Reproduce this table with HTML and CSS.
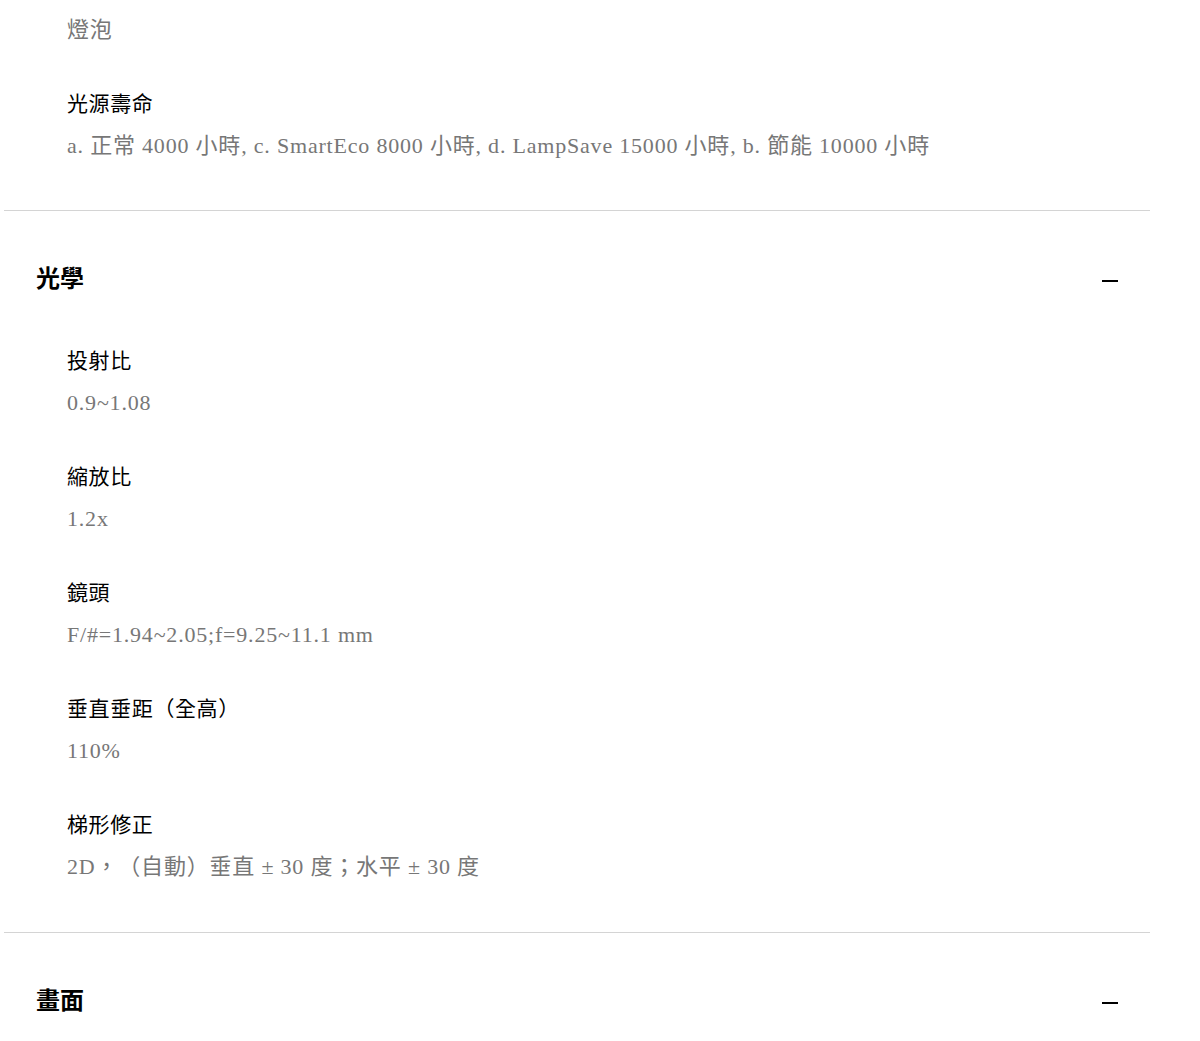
FILE: index.html
```html
<!DOCTYPE html>
<html lang="zh-Hant">
<head>
    <meta charset="UTF-8">
    <meta name="viewport" content="width=device-width, initial-scale=1.0">
    <title>規格</title>
    <link rel="stylesheet" href="styles.css">
</head>
<body>
    <div class="specs">
        <section class="spec-group">
            <div class="spec-list first">
                <div class="spec-item">
                    <div class="spec-value">燈泡</div>
                </div>
                <div class="spec-item">
                    <div class="spec-label">光源壽命</div>
                    <div class="spec-value">a. 正常 4000 小時, c. SmartEco 8000 小時, d. LampSave 15000 小時, b. 節能 10000 小時</div>
                </div>
            </div>
        </section>
        <section class="spec-group">
            <div class="spec-head">
                <h2>光學</h2>
                <span class="toggle"></span>
            </div>
            <div class="spec-list">
                <div class="spec-item">
                    <div class="spec-label">投射比</div>
                    <div class="spec-value">0.9~1.08</div>
                </div>
                <div class="spec-item">
                    <div class="spec-label">縮放比</div>
                    <div class="spec-value">1.2x</div>
                </div>
                <div class="spec-item">
                    <div class="spec-label">鏡頭</div>
                    <div class="spec-value">F/#=1.94~2.05;f=9.25~11.1 mm</div>
                </div>
                <div class="spec-item">
                    <div class="spec-label">垂直垂距（全高）</div>
                    <div class="spec-value">110%</div>
                </div>
                <div class="spec-item">
                    <div class="spec-label">梯形修正</div>
                    <div class="spec-value">2D，（自動）垂直 ± 30 度；水平 ± 30 度</div>
                </div>
            </div>
        </section>
        <section class="spec-group">
            <div class="spec-head">
                <h2>畫面</h2>
                <span class="toggle"></span>
            </div>
        </section>
    </div>
</body>
</html>
```

FILE: styles.css
```css
body {
    margin: 0;
    background-color: #fff;
    font-family: "Noto Sans CJK TC", "Noto Sans", sans-serif;
    color: #000;
    text-spacing-trim: space-all;
}
.specs {
    width: 1146px;
    margin-left: 4px;
}
.spec-group {
    border-top: 1px solid #d4d4d4;
}
.spec-group:first-child {
    border-top: none;
}
.spec-head {
    display: flex;
    align-items: center;
    justify-content: space-between;
    padding: 50px 32px 52px;
}
.spec-head h2 {
    margin: 0;
    font-size: 24px;
    font-weight: bold;
    line-height: 32px;
}
.toggle {
    width: 16px;
    height: 2px;
    margin-top: 8px;
    background-color: #000;
}
.spec-list {
    display: flex;
    flex-direction: column;
    gap: 42px;
    padding: 0 32px 49px 63px;
}
.spec-list.first {
    padding-top: 14px;
    padding-bottom: 48px;
}
.spec-label {
    font-size: 21px;
    line-height: 28px;
    letter-spacing: 0.6px;
}
.spec-value {
    margin-top: 14px;
    font-family: "Liberation Serif", "Noto Sans CJK TC", serif;
    font-size: 22px;
    line-height: 32px;
    letter-spacing: 0.8px;
    color: #777;
}
.spec-list.first .spec-item:first-child .spec-value {
    margin-top: 0;
}
```
